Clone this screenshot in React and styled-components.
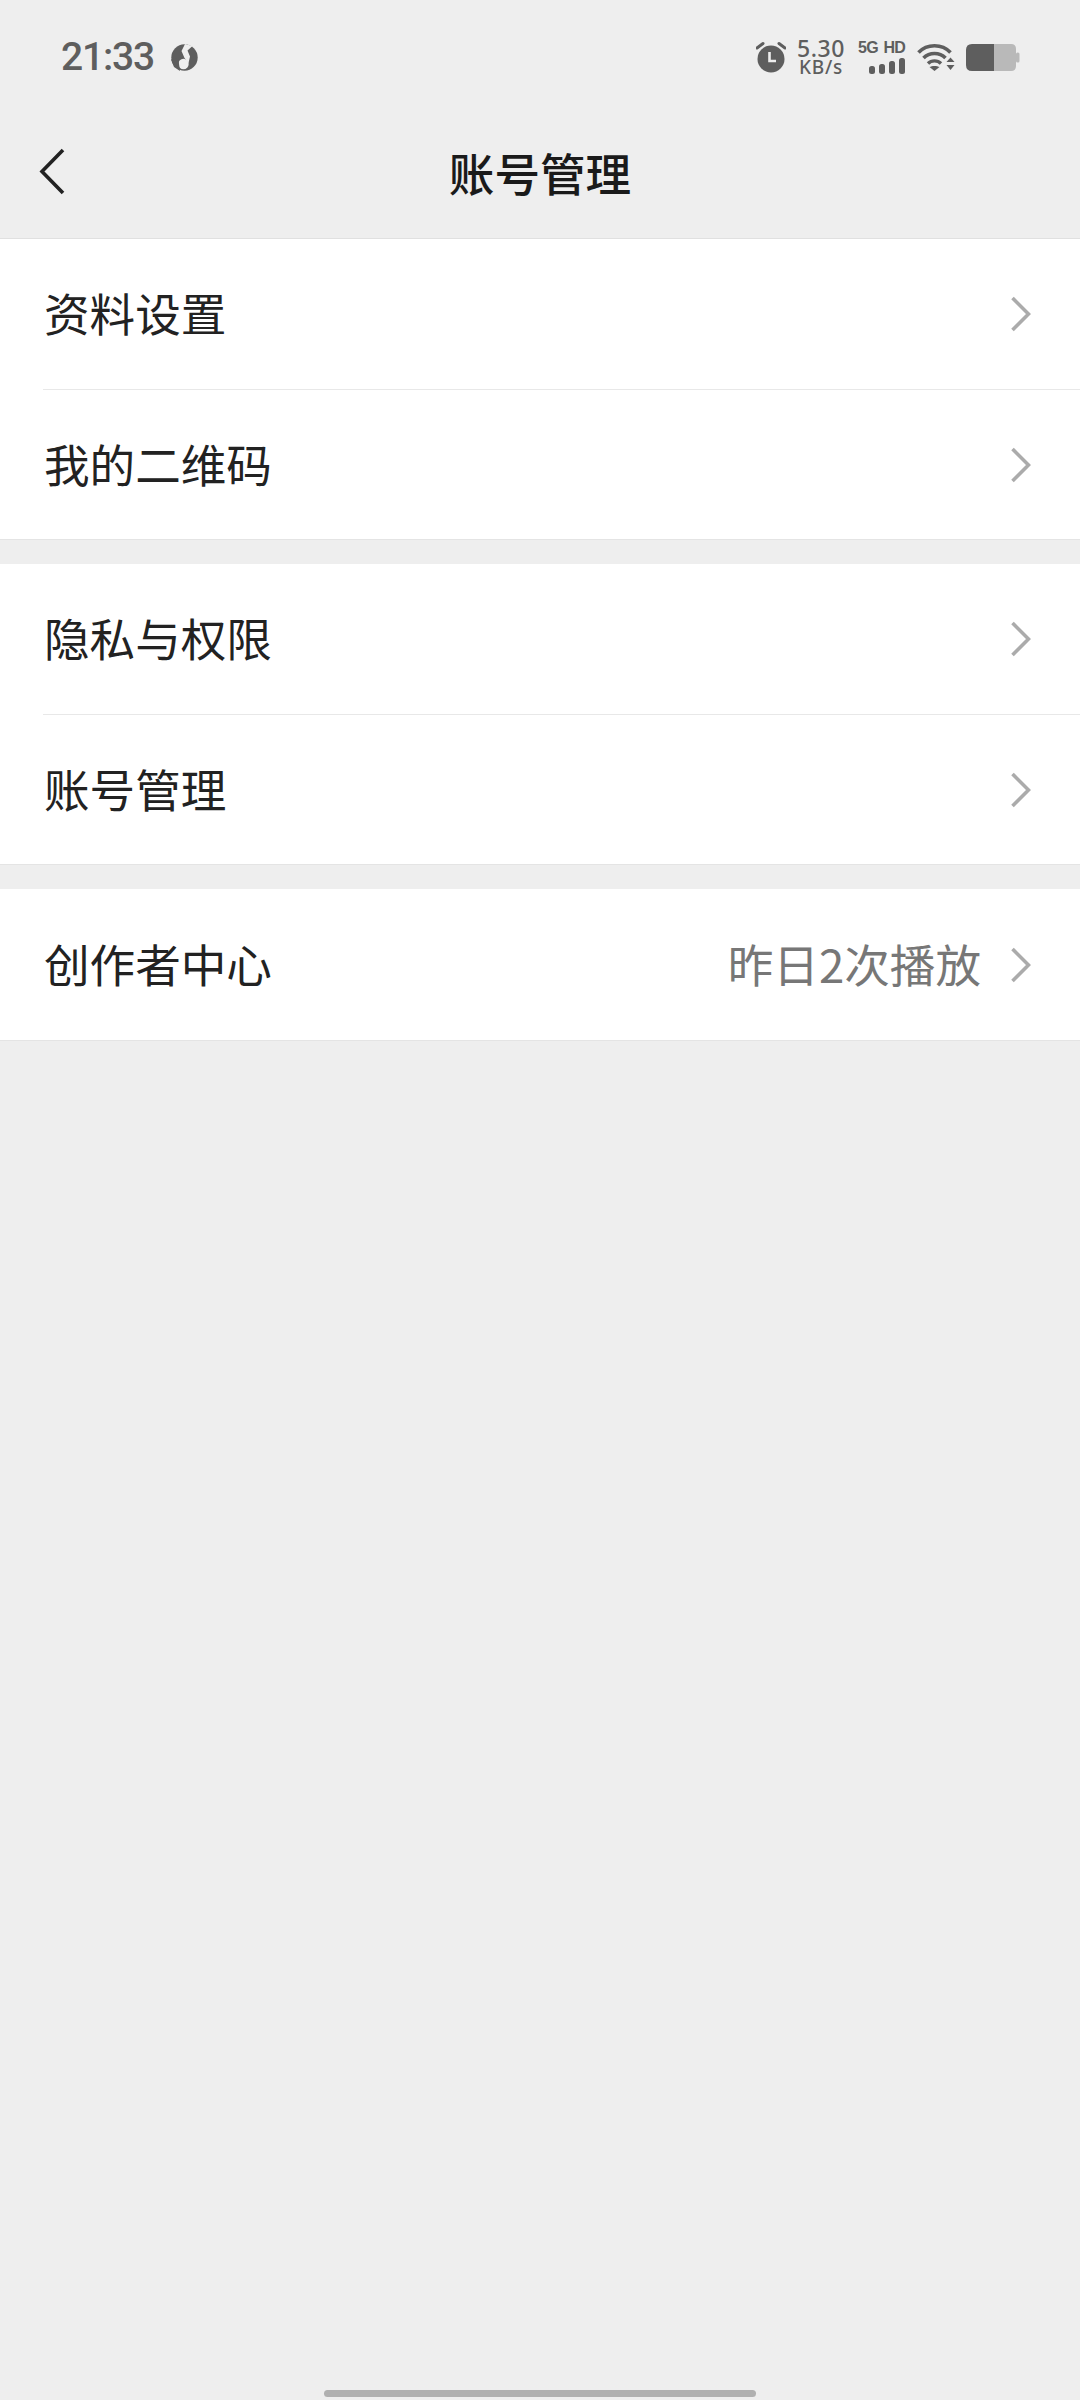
import React from "react";
import styled, { createGlobalStyle } from "styled-components";

const GlobalStyle = createGlobalStyle`
  html, body {
    margin: 0;
    padding: 0;
    background: #eeeeee;
    font-family: "Noto Sans CJK SC", "Noto Sans", sans-serif;
  }
`;

const Page = styled.div`
  width: 1080px;
  height: 2400px;
  background: #eeeeee;
  display: flex;
  flex-direction: column;
  overflow: hidden;
  position: relative;
`;

const StatusBar = styled.div`
  height: 114px;
  padding: 0 60px 0 61px;
  display: flex;
  align-items: center;
  justify-content: space-between;
  color: #5e5e5e;
  box-sizing: border-box;
`;

const StatusLeft = styled.div`
  display: flex;
  align-items: center;
  gap: 17px;
`;

const Time = styled.span`
  font-family: Roboto, sans-serif;
  font-size: 39px;
  font-weight: 500;
  line-height: 1;
  letter-spacing: -1.2px;
`;

const StatusRight = styled.div`
  display: flex;
  align-items: center;
`;

const Speed = styled.div`
  display: flex;
  flex-direction: column;
  align-items: center;
  margin-left: 11px;
  font-family: "Noto Sans", sans-serif;
  font-weight: 500;
`;

const SpeedValue = styled.span`
  display: block;
  font-size: 23px;
  line-height: 20px;
  letter-spacing: 0.6px;
`;

const SpeedUnit = styled.span`
  display: block;
  font-size: 19px;
  line-height: 19px;
  letter-spacing: 0.8px;
`;

const Signal = styled.div`
  display: flex;
  flex-direction: column;
  align-items: flex-end;
  margin-left: 13px;
  gap: 3px;
`;

const SignalLabel = styled.span`
  font-family: "Liberation Sans", sans-serif;
  font-size: 16px;
  font-weight: 700;
  line-height: 15px;
  letter-spacing: -0.8px;
  word-spacing: 2px;
`;

const WifiSlot = styled.div`
  display: flex;
  margin: 0 11px 0 12px;
`;

const Header = styled.div`
  height: 124px;
  display: flex;
  align-items: center;
  justify-content: center;
  position: relative;
  border-bottom: 1px solid #e0e0e0;
`;

const BackButton = styled.div`
  position: absolute;
  left: 38px;
  top: 34px;
  display: flex;
`;

const Title = styled.h1`
  margin: 0 0 7px;
  font-size: 45.6px;
  font-weight: 500;
  color: #1a1a1a;
  line-height: 1;
`;

const Group = styled.div`
  background: #ffffff;
  margin-bottom: ${(p) => p.$gap || 0}px;
  border-bottom: 1px solid #e4e4e4;
`;

const Row = styled.div`
  height: ${(p) => p.$height || 150}px;
  display: flex;
  align-items: center;
  justify-content: space-between;
  padding: 0 49px 0 ${(p) => (p.$line ? "1px" : "44px")};
  box-sizing: border-box;
  border-top: ${(p) => (p.$line ? "1px solid #e8e8e8" : "none")};
  margin-left: ${(p) => (p.$line ? "43px" : "0")};
`;

const Label = styled.span`
  font-size: 45.6px;
  color: #222222;
  line-height: 1;
  margin-bottom: 2px;
`;

const RowRight = styled.div`
  display: flex;
  align-items: center;
  gap: 29px;
`;

const Hint = styled.span`
  font-size: 45.6px;
  color: #777777;
  line-height: 1;
  margin-bottom: 2px;
`;

const HomeBar = styled.div`
  position: absolute;
  left: 324px;
  bottom: 3px;
  width: 432px;
  height: 7px;
  border-radius: 4px;
  background: #b0b0b0;
`;

const Chevron = () => (
  <svg width="21" height="36" viewBox="0 0 21 36" fill="none">
    <path d="M2.5 2 L18.5 18 L2.5 34" stroke="#ababab" strokeWidth="3.6" />
  </svg>
);

const BackIcon = () => (
  <svg width="30" height="50" viewBox="0 0 30 50" fill="none">
    <path d="M25 2 L4 23.5 L25 45" stroke="#222222" strokeWidth="3.6" />
  </svg>
);

const MusicIcon = () => (
  <svg width="27" height="27" viewBox="0 0 27 27">
    <circle cx="13.5" cy="13.5" r="13.2" fill="#5e5e5e" />
    <path d="M14 0 L21.5 2 L16.5 6.5 L19 12.5 L17.5 19 L13.5 14 L10.5 7 Z" fill="#eeeeee" />
    <circle cx="12.5" cy="20" r="5.2" fill="#eeeeee" />
    <path d="M0 15.5 L7.5 14 L8 20 L9 27 L3 23 Z" fill="#5e5e5e" />
  </svg>
);

const AlarmIcon = () => (
  <svg width="30" height="32" viewBox="0 0 30 32">
    <circle cx="15" cy="18" r="13.5" fill="#5e5e5e" />
    <path d="M13.5 11 V20 H20" stroke="#eeeeee" strokeWidth="2.6" fill="none" />
    <path d="M1 7 L7 2.5" stroke="#5e5e5e" strokeWidth="3" strokeLinecap="round" />
    <path d="M29 7 L23 2.5" stroke="#5e5e5e" strokeWidth="3" strokeLinecap="round" />
  </svg>
);

const SignalBars = () => (
  <svg width="36" height="16" viewBox="0 0 36 16">
    <rect x="0" y="8" width="6" height="8" rx="2.5" fill="#5e5e5e" />
    <rect x="10" y="6" width="6" height="10" rx="2.5" fill="#5e5e5e" />
    <rect x="20" y="3" width="6" height="13" rx="2.5" fill="#5e5e5e" />
    <rect x="30" y="0" width="6" height="16" rx="2.5" fill="#5e5e5e" />
  </svg>
);

const WifiIcon = () => (
  <svg width="38" height="28" viewBox="0 0 38 28" fill="none">
    <path d="M1.5 9.5 C10 0.5 25 0.5 33.5 9.5" stroke="#5e5e5e" strokeWidth="3.6" />
    <path d="M6.5 15 C12.5 9 22.5 9 28.5 15" stroke="#5e5e5e" strokeWidth="3.6" />
    <path d="M11 20.5 C14.5 17 20.5 17 24 20.5" stroke="#5e5e5e" strokeWidth="3.4" />
    <path d="M12.5 24 C15 22.5 20 22.5 22.5 24 L17.5 28 Z" fill="#5e5e5e" />
    <path d="M29.5 19 L33.5 14.5 L37.5 19 Z" fill="#5e5e5e" />
    <path d="M29.5 22 L33.5 27 L37.5 22 Z" fill="#5e5e5e" />
  </svg>
);

const BatteryIcon = () => (
  <svg width="54" height="27" viewBox="0 0 54 27">
    <path d="M28 0 H45 Q50 0 50 5 V22 Q50 27 45 27 H28 Z" fill="#b9b9b9" />
    <path d="M6 0 H28 V27 H6 Q0 27 0 21 V6 Q0 0 6 0 Z" fill="#5e5e5e" />
    <rect x="50" y="8.5" width="3.5" height="10" rx="1.5" fill="#b9b9b9" />
  </svg>
);

const groups = [
  { items: [{ label: "资料设置" }, { label: "我的二维码" }], gap: 24 },
  { items: [{ label: "隐私与权限" }, { label: "账号管理" }], gap: 24 },
  { items: [{ label: "创作者中心", hint: "昨日2次播放" }], gap: 0, height: 151 },
];

export default function App() {
  return (
    <Page>
      <GlobalStyle />
      <StatusBar>
        <StatusLeft>
          <Time>21:33</Time>
          <MusicIcon />
        </StatusLeft>
        <StatusRight>
          <AlarmIcon />
          <Speed>
            <SpeedValue>5.30</SpeedValue>
            <SpeedUnit>KB/s</SpeedUnit>
          </Speed>
          <Signal>
            <SignalLabel>5G HD</SignalLabel>
            <SignalBars />
          </Signal>
          <WifiSlot>
            <WifiIcon />
          </WifiSlot>
          <BatteryIcon />
        </StatusRight>
      </StatusBar>
      <Header>
        <BackButton>
          <BackIcon />
        </BackButton>
        <Title>账号管理</Title>
      </Header>
      {groups.map((group, i) => (
        <Group key={i} $gap={group.gap}>
          {group.items.map((item, j) => (
            <Row key={item.label} $line={j > 0} $height={group.height}>
              <Label>{item.label}</Label>
              <RowRight>
                {item.hint && <Hint>{item.hint}</Hint>}
                <Chevron />
              </RowRight>
            </Row>
          ))}
        </Group>
      ))}
      <HomeBar />
    </Page>
  );
}
